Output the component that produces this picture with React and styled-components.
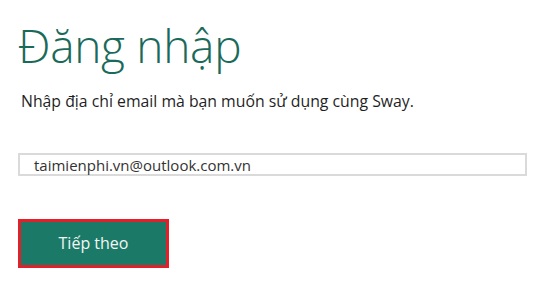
import React from 'react';
import styled, { createGlobalStyle } from 'styled-components';

const Global = createGlobalStyle`
  html, body {
    margin: 0;
    padding: 0;
    background: #fff;
  }
  body {
    font-family: "Open Sans", "Noto Sans", sans-serif;
    color: #222;
  }
`;

const Page = styled.div`
  width: 550px;
  height: 285px;
  box-sizing: border-box;
  padding: 14px 0 0 18px;
  display: flex;
  flex-direction: column;
  background: #fff;
`;

const Title = styled.h1`
  margin: 0;
  font-weight: 300;
  font-size: 46px;
  line-height: 62px;
  color: #1a6a5b;
  letter-spacing: -0.3px;
`;

const Lead = styled.p`
  margin: 15px 0 0 3px;
  font-size: 15.8px;
  line-height: 20px;
  color: #1f1f1f;
`;

const EmailBox = styled.div`
  margin-top: 42px;
  width: 509px;
  height: 23px;
  box-sizing: border-box;
  border: 2px solid #dadada;
  padding-left: 14px;
  display: flex;
  align-items: center;
  font-size: 15px;
  color: #333;
`;

const Next = styled.button`
  margin-top: 43px;
  width: 151px;
  height: 49px;
  box-sizing: border-box;
  border: 3px solid #e3202a;
  background: #1b7a67;
  color: #f2f6f4;
  font-family: "Open Sans", "Noto Sans", sans-serif;
  font-size: 16px;
  padding: 0 0 2px 0;
  cursor: pointer;
`;

export default function App() {
  return (
    <>
      <Global />
      <Page>
        <Title>Đăng nhập</Title>
        <Lead>Nhập địa chỉ email mà bạn muốn sử dụng cùng Sway.</Lead>
        <EmailBox>taimienphi.vn@outlook.com.vn</EmailBox>
        <Next>Tiếp theo</Next>
      </Page>
    </>
  );
}
